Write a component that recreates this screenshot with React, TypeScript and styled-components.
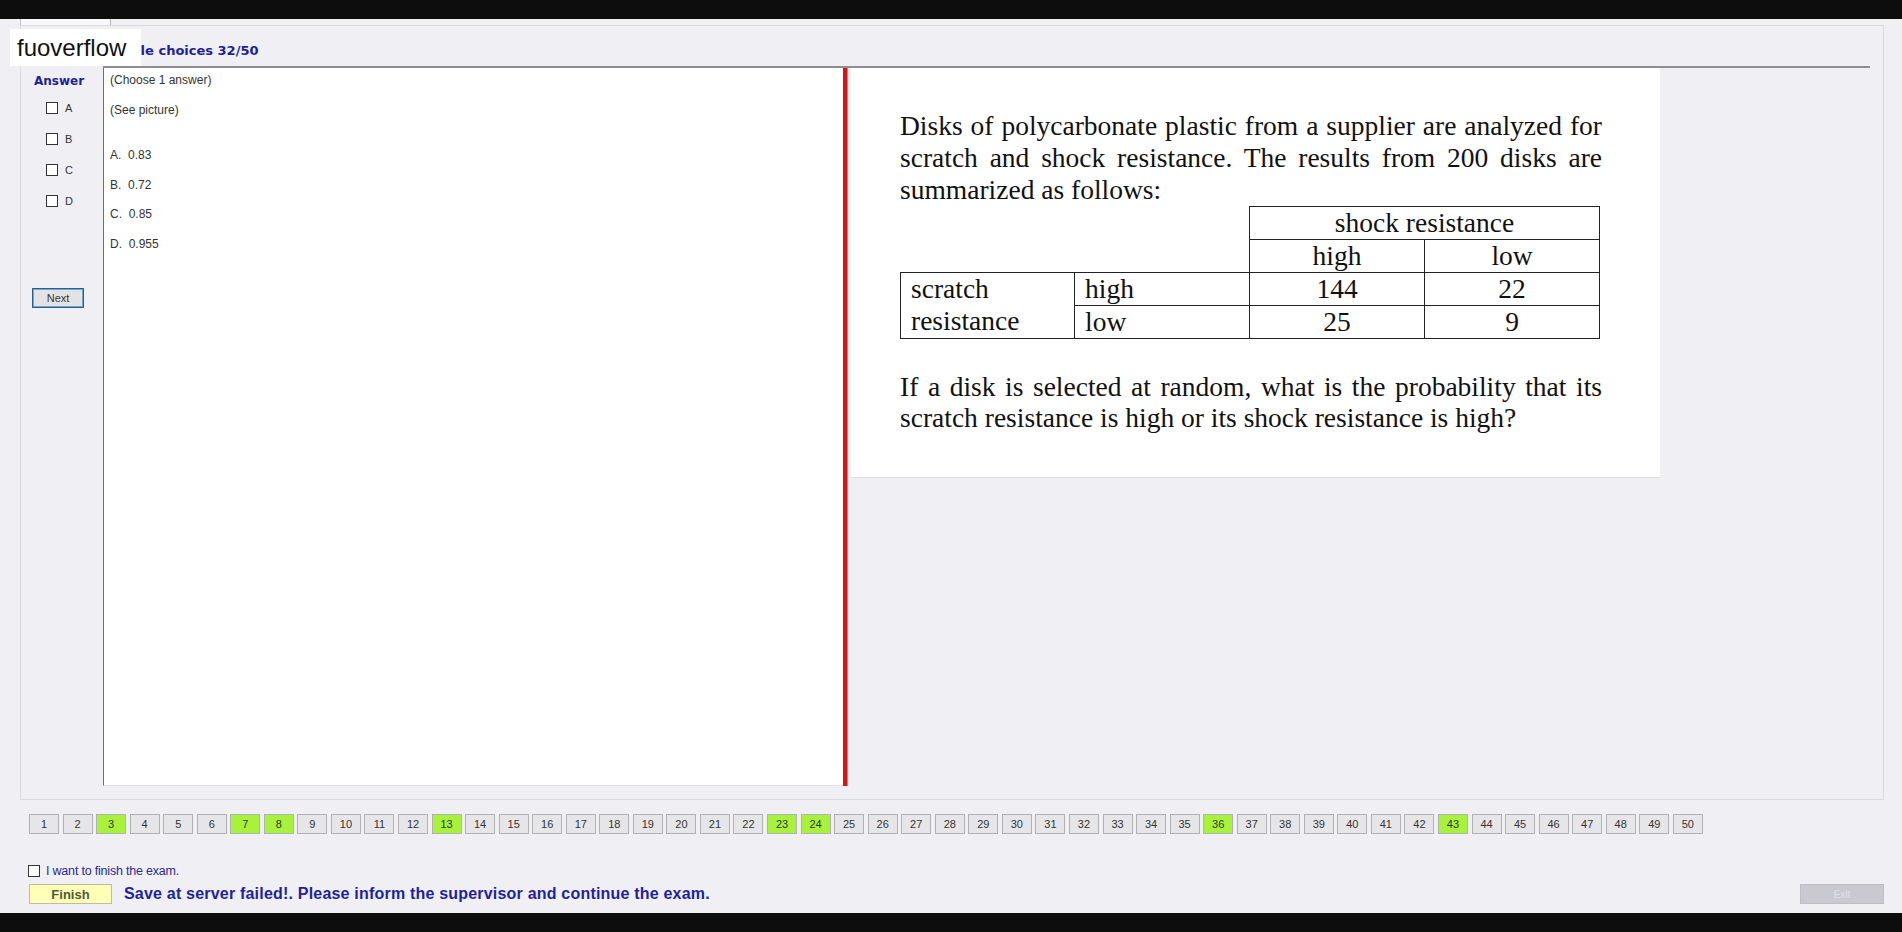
import React from 'react';
import styled, { createGlobalStyle } from 'styled-components';

const GlobalStyle = createGlobalStyle`
  html, body {
    margin: 0;
    padding: 0;
  }
  body {
    width: 1902px;
    height: 932px;
    overflow: hidden;
    background: #0d0d0d;
    font-family: "Liberation Sans", Arial, sans-serif;
  }
`;

const answered = [3, 7, 8, 13, 23, 24, 36, 43];

const options = [
  { key: 'A', text: '0.83' },
  { key: 'B', text: '0.72' },
  { key: 'C', text: '0.85' },
  { key: 'D', text: '0.955' },
];

const App = () => (
  <Screen>
    <GlobalStyle />
    <BlackBar />
    <Workspace>
      <TabStrip>
        <Tab />
      </TabStrip>
      <Frame>
        <TitleRow>
          <Title>Multiple choices 32/50</Title>
        </TitleRow>
        <Content>
          <AnswerColumn>
            <AnswerHeading>Answer</AnswerHeading>
            {options.map((o, i) => (
              <OptionRow key={o.key} $first={i === 0}>
                <CheckBox />
                <OptionLetter>{o.key}</OptionLetter>
              </OptionRow>
            ))}
            <NextButton>Next</NextButton>
          </AnswerColumn>
          <Section>
            <QuestionPanel>
              <QuestionLine $gap={0}>(Choose 1 answer)</QuestionLine>
              <QuestionLine $gap={16}>(See picture)</QuestionLine>
              {options.map((o, i) => (
                <QuestionLine key={o.key} $gap={i === 0 ? 31 : 15.5}>
                  {`${o.key}.  ${o.text}`}
                </QuestionLine>
              ))}
            </QuestionPanel>
            <Splitter />
            <PicturePane>
              <ImageCard>
                <Paragraph>
                  Disks of polycarbonate plastic from a supplier are analyzed for scratch and shock
                  resistance. The results from 200 disks are summarized as follows:
                </Paragraph>
                <DataTable>
                  <colgroup>
                    <col style={{ width: 174 }} />
                    <col style={{ width: 175 }} />
                    <col style={{ width: 175 }} />
                    <col style={{ width: 175 }} />
                  </colgroup>
                  <tbody>
                    <tr>
                      <Blank colSpan={2} rowSpan={2} />
                      <Cell colSpan={2} $center>
                        shock resistance
                      </Cell>
                    </tr>
                    <tr>
                      <Cell $center>high</Cell>
                      <Cell $center>low</Cell>
                    </tr>
                    <tr>
                      <Cell rowSpan={2} $stack>
                        scratch
                        <br />
                        resistance
                      </Cell>
                      <Cell>high</Cell>
                      <Cell $center>144</Cell>
                      <Cell $center>22</Cell>
                    </tr>
                    <tr>
                      <Cell>low</Cell>
                      <Cell $center>25</Cell>
                      <Cell $center>9</Cell>
                    </tr>
                  </tbody>
                </DataTable>
                <Paragraph $top={32} $lh={31}>
                  If a disk is selected at random, what is the probability that its scratch
                  resistance is high or its shock resistance is high?
                </Paragraph>
              </ImageCard>
            </PicturePane>
          </Section>
        </Content>
      </Frame>
      <NumberRow>
        {Array.from({ length: 50 }, (_, i) => i + 1).map((n) => (
          <NumberButton key={n} $done={answered.includes(n)}>
            {n}
          </NumberButton>
        ))}
      </NumberRow>
      <ConfirmRow>
        <CheckBox />
        <ConfirmLabel>I want to finish the exam.</ConfirmLabel>
      </ConfirmRow>
      <ActionRow>
        <ActionLeft>
          <FinishButton>Finish</FinishButton>
          <StatusMessage>
            Save at server failed!. Please inform the supervisor and continue the exam.
          </StatusMessage>
        </ActionLeft>
        <ExitButton disabled>Exit</ExitButton>
      </ActionRow>
    </Workspace>
    <BlackBar />
    <Watermark>fuoverflow</Watermark>
  </Screen>
);

const Screen = styled.div`
  position: relative;
  width: 1902px;
  height: 932px;
  display: flex;
  flex-direction: column;
  background: #0d0d0d;
`;

const BlackBar = styled.div`
  flex: none;
  height: 19px;
  background: #0d0d0d;
`;

const Workspace = styled.div`
  flex: 1;
  display: flex;
  flex-direction: column;
  padding: 0 18px 0 20px;
  background: #f0f0f4;
`;

const TabStrip = styled.div`
  height: 6px;
  display: flex;
`;

const Tab = styled.div`
  width: 89px;
  border-left: 1px solid #c4c4c8;
  border-right: 1px solid #b4b4b8;
  background: #f8f8fa;
`;

const Frame = styled.div`
  box-sizing: border-box;
  height: 775px;
  display: flex;
  flex-direction: column;
  border: 1px solid #dadadf;
  padding-bottom: 13px;
`;

const TitleRow = styled.div`
  height: 40px;
  box-sizing: border-box;
  padding: 17px 0 0 73px;
`;

const Title = styled.div`
  font-family: "DejaVu Sans", Tahoma, sans-serif;
  font-weight: 700;
  font-size: 13px;
  line-height: 16px;
  color: #1f1f99;
`;

const Content = styled.div`
  flex: 1;
  display: flex;
  min-height: 0;
`;

const AnswerColumn = styled.div`
  width: 82px;
  flex: none;
  display: flex;
  flex-direction: column;
  align-items: flex-start;
  padding: 7px 0 0 11px;
  box-sizing: border-box;
`;

const AnswerHeading = styled.div`
  margin-left: 2px;
  font-family: "DejaVu Sans", Tahoma, sans-serif;
  font-weight: 700;
  font-size: 12px;
  line-height: 16px;
  color: #1f1f99;
`;

const OptionRow = styled.div<{ $first: boolean }>`
  display: flex;
  align-items: center;
  gap: 7px;
  height: 12px;
  margin: ${(p) => (p.$first ? 13 : 19)}px 0 0 14px;
`;

const CheckBox = styled.span`
  display: block;
  width: 12px;
  height: 12px;
  box-sizing: border-box;
  border: 1px solid #333;
  background: #fff;
`;

const OptionLetter = styled.span`
  font-size: 11px;
  line-height: 12px;
  color: #333;
`;

const NextButton = styled.button`
  margin-top: 81px;
  width: 52px;
  height: 20px;
  padding: 0;
  box-sizing: border-box;
  border: 1px solid #2b5f8f;
  box-shadow: inset 0 0 0 1px #6fa6da;
  background: #e3e3e6;
  font-family: "Liberation Sans", Arial, sans-serif;
  font-size: 11px;
  color: #333;
`;

const Section = styled.div`
  flex: 1;
  display: flex;
  margin-right: 13px;
  border-top: 2px solid #8e8e92;
`;

const QuestionPanel = styled.div`
  width: 740px;
  flex: none;
  box-sizing: border-box;
  padding: 5px 0 0 6px;
  background: #fff;
  border-left: 1px solid #6e6e6e;
  border-bottom: 1px solid #e2e2e6;
`;

const QuestionLine = styled.div<{ $gap: number }>`
  margin-top: ${(p) => p.$gap}px;
  font-size: 12px;
  line-height: 14px;
  color: #333;
  white-space: pre;
`;

const Splitter = styled.div`
  width: 4px;
  flex: none;
  background: #d4161b;
`;

const PicturePane = styled.div`
  flex: 1;
  border-left: 1px solid #9a9a9e;
  padding-left: 3px;
`;

const ImageCard = styled.div`
  width: 809px;
  height: 410px;
  box-sizing: border-box;
  padding: 42px 58px 0 49px;
  background: #fff;
  border-bottom: 1px solid #dedee2;
  font-family: "Liberation Serif", "Times New Roman", serif;
  font-size: 27.5px;
  color: #111;
`;

const Paragraph = styled.p<{ $top?: number; $lh?: number }>`
  margin: ${(p) => p.$top ?? 0}px 0 0;
  line-height: ${(p) => p.$lh ?? 32}px;
  text-align: justify;
`;

const DataTable = styled.table`
  width: 699px;
  border-collapse: collapse;
  table-layout: fixed;
`;

const Blank = styled.td`
  padding: 0;
  border: none;
`;

const Cell = styled.td<{ $center?: boolean; $stack?: boolean }>`
  height: 32px;
  padding: 0 10px;
  border: 1px solid #222;
  line-height: 32px;
  text-align: ${(p) => (p.$center ? 'center' : 'left')};
  vertical-align: ${(p) => (p.$stack ? 'top' : 'middle')};
  white-space: nowrap;
`;

const NumberRow = styled.div`
  display: flex;
  gap: 3.55px;
  margin-top: 14px;
  padding-left: 9px;
`;

const NumberButton = styled.div<{ $done: boolean }>`
  width: 30px;
  height: 20px;
  box-sizing: border-box;
  display: flex;
  align-items: center;
  justify-content: center;
  border: 1px solid #b2b2b6;
  background: ${(p) => (p.$done ? '#a8f23c' : '#e6e6e9')};
  font-family: "Liberation Sans Narrow", "Liberation Sans", Arial, sans-serif;
  font-size: 11px;
  color: #333;
`;

const ConfirmRow = styled.div`
  display: flex;
  align-items: center;
  gap: 6px;
  margin-top: 31px;
  padding-left: 8px;
  height: 12px;
`;

const ConfirmLabel = styled.span`
  font-family: "Liberation Sans Narrow", "Liberation Sans", Arial, sans-serif;
  font-size: 12.5px;
  color: #2a2a8e;
  letter-spacing: -0.2px;
`;

const ActionRow = styled.div`
  display: flex;
  align-items: center;
  justify-content: space-between;
  margin-top: 7px;
  padding-left: 9px;
  height: 20px;
`;

const ActionLeft = styled.div`
  display: flex;
  align-items: center;
  gap: 12px;
`;

const FinishButton = styled.button`
  width: 83px;
  height: 20px;
  padding: 0;
  box-sizing: border-box;
  border: 1px solid #bdbda4;
  background: #ffffb8;
  font-family: "Liberation Sans", Arial, sans-serif;
  font-weight: 700;
  font-size: 13px;
  color: #4e5b35;
`;

const StatusMessage = styled.span`
  font-family: "Liberation Sans", Arial, sans-serif;
  font-weight: 700;
  font-size: 16px;
  letter-spacing: 0.2px;
  color: #1f1fa0;
`;

const ExitButton = styled.button`
  width: 84px;
  height: 20px;
  padding: 0;
  box-sizing: border-box;
  border: 1px solid #bdbdc3;
  background: #c9c9cf;
  font-family: "Liberation Sans", Arial, sans-serif;
  font-size: 10px;
  color: #e2e2e6;
`;

const Watermark = styled.div`
  position: absolute;
  left: 10px;
  top: 29px;
  width: 131px;
  height: 37px;
  box-sizing: border-box;
  padding-left: 7px;
  background: #fff;
  font-family: "Liberation Sans", Arial, sans-serif;
  font-size: 24px;
  line-height: 37px;
  color: #111;
`;

export default App;
